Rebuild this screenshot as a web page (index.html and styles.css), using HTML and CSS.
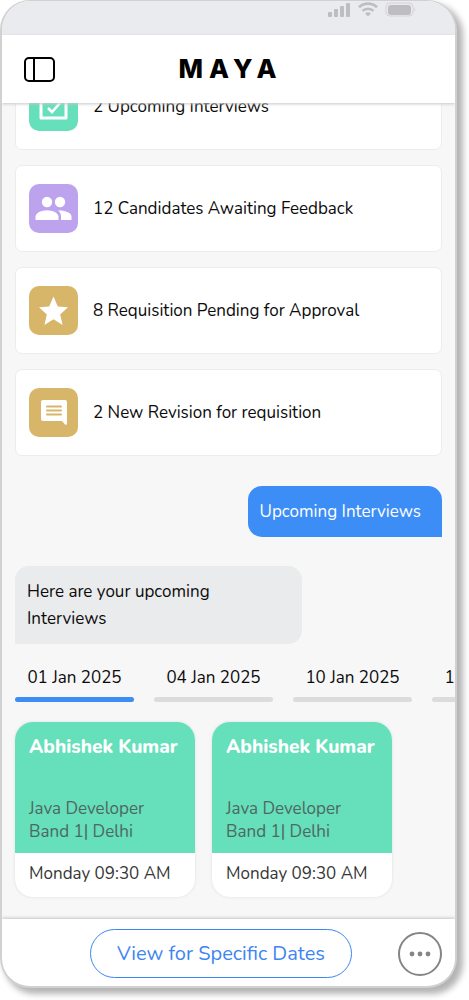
FILE: index.html
```html
<!DOCTYPE html>
<html lang="en">
<head>
<meta charset="utf-8">
<meta name="viewport" content="width=device-width, initial-scale=1">
<title>Maya</title>
<link rel="stylesheet" href="styles.css">
</head>
<body>
<div class="phone">
  <div class="status">
    <svg width="23" height="16" viewBox="0 0 23 16" fill="currentColor"><rect x="0" y="11" width="4" height="5" rx="1"/><rect x="6" y="8" width="4" height="8" rx="1"/><rect x="12" y="5" width="4" height="11" rx="1"/><rect x="18" y="2" width="4" height="14" rx="1"/></svg>
    <svg width="20" height="16" viewBox="0 0 20 16" fill="none" stroke="currentColor" stroke-width="3"><path d="M1 6.300a12.800 12.800 0 0 1 18 0" stroke-width="2.8"/><path d="M4.500 9.900a8 8 0 0 1 11 0" stroke-width="2.6"/><path d="M10 15.400 7.100 12.500a4.400 4.400 0 0 1 5.800 0z" fill="currentColor" stroke="none"/></svg>
    <svg width="31" height="16" viewBox="0 0 31 16"><rect x="1" y="2" width="27" height="13" rx="4" fill="none" stroke="#d4d4d7"/><rect x="3" y="4" width="23" height="10" rx="3" fill="currentColor"/><path d="M29.500 6.500q1.500 2 0 4z" fill="#d0d0d3"/></svg>
  </div>
  <header class="header">
    <button class="menu" type="button" aria-label="Toggle sidebar">
      <svg width="32" height="26" viewBox="0 0 32 26" fill="none" stroke="#000" stroke-width="2"><rect x="2" y="2" width="29" height="23" rx="4"/><path d="M11 2v23"/></svg>
    </button>
    <h1 class="logo">MAYA</h1>
  </header>
  <main class="content">
    <div class="list">
      <a class="item" href="#interviews">
        <span class="icon green"><svg width="33" height="33" viewBox="0 0 33 33" fill="none" stroke="#fff"><path d="M4 5h25v23H4z" stroke-width="3" stroke-linejoin="round"/><path d="M4 7h25M10 1v4M23 1v4" stroke-width="4"/><path d="m11 18 4 4 8-9" stroke-width="2.6"/></svg></span>
        2 Upcoming Interviews
      </a>
      <a class="item" href="#feedback">
        <span class="icon purple"><svg width="37" height="25" viewBox="0 0 37 25" fill="#fff"><circle cx="12" cy="6" r="5.200"/><circle cx="25" cy="6" r="5.200"/><path d="M.5 24v-3.300C.5 17 6.500 14.200 12 14.200s11.500 2.800 11.500 6.500V24z"/><path d="M26 24v-3.500c0-2.500-1-4.500-3-6 6-.6 13.500 2 13.500 6V24z"/></svg></span>
        12 Candidates Awaiting Feedback
      </a>
      <a class="item" href="#approval">
        <span class="icon gold"><svg width="31" height="30" viewBox="0 0 31 30" fill="#fff"><path d="m15.500.5 4.300 9.900 10.200.9-7.800 7.100 2.400 10.500-9.100-5.600-9.100 5.600 2.400-10.500L1 11.300l10.200-.9z"/></svg></span>
        8 Requisition Pending for Approval
      </a>
      <a class="item" href="#revision">
        <span class="icon gold"><svg width="28" height="27" viewBox="0 0 28 27"><path d="M3 1h22q2 0 2 2v21.500q0 2-2 1L22 22H3q-2 0-2-2V3q0-2 2-2z" fill="#fff"/><path d="M7 7.500h14M7 11.500h14M7 15.500h14" stroke="#d7b569" stroke-width="2" stroke-linecap="round"/></svg></span>
        2 New Revision for requisition
      </a>
    </div>
    <p class="bubble sent">Upcoming Interviews</p>
    <p class="bubble received">Here are your upcoming Interviews</p>
    <div class="tabs">
      <button type="button" class="tab active">01 Jan 2025</button>
      <button type="button" class="tab">04 Jan 2025</button>
      <button type="button" class="tab">10 Jan 2025</button>
      <button type="button" class="tab">11 Jan 2025</button>
    </div>
    <div class="cards">
      <article class="card">
        <div class="card-top"><h2>Abhishek Kumar</h2><p>Java Developer<br>Band 1| Delhi</p></div>
        <p class="time">Monday 09:30 AM</p>
      </article>
      <article class="card">
        <div class="card-top"><h2>Abhishek Kumar</h2><p>Java Developer<br>Band 1| Delhi</p></div>
        <p class="time">Monday 09:30 AM</p>
      </article>
    </div>
  </main>
  <footer class="footer">
    <button type="button" class="dates">View for Specific Dates</button>
    <button type="button" class="more" aria-label="More options">
      <svg width="22" height="6" viewBox="0 0 22 6" fill="#858585"><circle cx="3" cy="3" r="2.400"/><circle cx="11" cy="3" r="2.400"/><circle cx="19" cy="3" r="2.400"/></svg>
    </button>
  </footer>
</div>
</body>
</html>
```
FILE: styles.css
```css
* { box-sizing: border-box; }
body {
  margin: 0;
  padding: 0 12px 12px 0;
  background: #fff;
  color: #0b0b0b;
  font-family: "Nunito", "Lato", "Noto Sans", sans-serif;
  font-size: 17px;
}
h1, h2, p { margin: 0; }
button {
  padding: 0;
  border: 0;
  background: none;
  color: inherit;
  font: inherit;
  cursor: pointer;
}
svg { display: block; flex: none; }
.phone {
  overflow: hidden;
  border: 2px solid #d0d1d0;
  border-top-width: 1px;
  border-radius: 30px;
  background: #f7f7f7;
  box-shadow: 5px 5px 6px 1px #b4b4b4;
}
.status {
  display: flex;
  justify-content: flex-end;
  gap: 7px;
  height: 34px;
  padding-right: 39px;
  background: #eaebef;
  color: #bebec0;
}
.header {
  position: relative;
  display: grid;
  grid-template-columns: 32px 1fr 32px;
  align-items: center;
  height: 68px;
  padding: 0 21px;
  background: #fff;
  box-shadow: 0 1px 3px #c8c8c8;
}
.logo {
  font-family: "Inter", sans-serif;
  font-size: 26px;
  font-weight: 800;
  line-height: 32px;
  letter-spacing: 6px;
  text-align: center;
  text-indent: 4px;
  color: #000;
}
.content {
  display: flex;
  flex-direction: column;
  overflow: hidden;
  padding: 0 13px 22px;
}
.list {
  display: flex;
  flex-direction: column;
  gap: 15px;
  margin-top: -40px;
}
.item {
  display: flex;
  align-items: center;
  gap: 15px;
  height: 87px;
  padding: 0 13px;
  border: 1px solid #ebecec;
  border-radius: 7px;
  background: #fff;
  color: inherit;
  text-decoration: none;
}
.icon {
  display: grid;
  place-items: center;
  width: 49px;
  height: 49px;
  border-radius: 10px;
}
.green { background: #66dfbb; }
.purple { background: #bda2ee; }
.gold { background: #d7b569; }
.bubble {
  padding: 12px;
  line-height: 27px;
}
.sent {
  align-self: flex-end;
  margin-top: 30px;
  padding-right: 21px;
  border-radius: 14px 14px 0 14px;
  background: #3d8df7;
  color: #fff;
}
.received {
  width: 287px;
  margin-top: 29px;
  padding-right: 60px;
  border-radius: 14px 14px 14px 0;
  background: #eaebed;
}
.tabs {
  display: flex;
  gap: 20px;
  margin: 22px -13px 0 0;
  overflow: hidden;
}
.tab {
  flex: none;
  width: 119px;
  line-height: 24px;
}
.tab::after {
  content: "";
  display: block;
  height: 5px;
  margin-top: 7px;
  border-radius: 3px;
  background: #dcdcdc;
}
.tab.active::after { background: #3d8df7; }
.cards {
  display: flex;
  gap: 17px;
  margin-top: 20px;
}
.card {
  overflow: hidden;
  width: 180px;
  border-radius: 18px;
  background: #fff;
  box-shadow: 0 0 3px #dcdcdc;
}
.card-top {
  display: flex;
  flex-direction: column;
  justify-content: space-between;
  height: 131px;
  padding: 12px 14px 10px;
  background: #66dfbb;
  color: #4d6860;
  line-height: 23px;
}
.card h2 {
  font-size: 19px;
  font-weight: 800;
  line-height: 26px;
  white-space: nowrap;
  color: #fff;
}
.time {
  padding: 9px 14px 11px;
  line-height: 24px;
  white-space: nowrap;
  color: #363636;
}
.footer {
  position: relative;
  display: flex;
  align-items: center;
  justify-content: flex-end;
  gap: 46px;
  padding: 10px 13px 8px;
  background: #fff;
  box-shadow: 0 -1px 3px #c4c4c4;
}
.dates {
  width: 262px;
  height: 49px;
  border: 1px solid #3d85f2;
  border-radius: 25px;
  color: #3d85f2;
  font-size: 20px;
}
.more {
  display: grid;
  place-items: center;
  width: 44px;
  height: 44px;
  border: 2px solid #858585;
  border-radius: 50%;
}
```
